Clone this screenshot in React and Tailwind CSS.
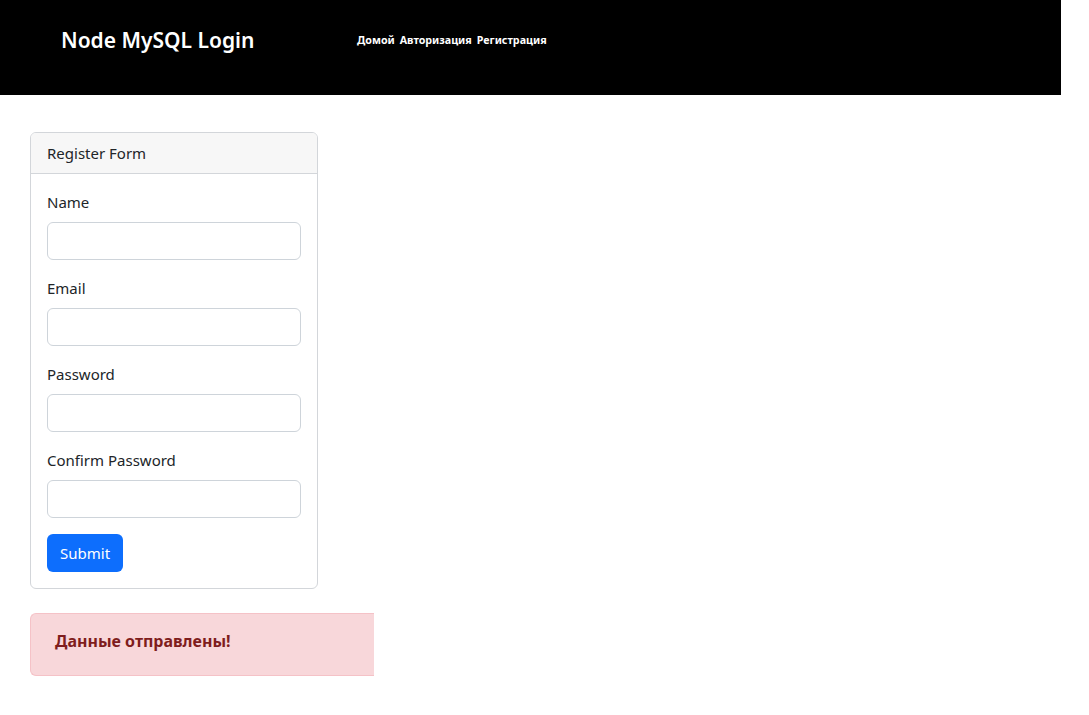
import React from 'react';

const fields = ['Name', 'Email', 'Password', 'Confirm Password'];

export default function App() {
  return (
    <div className="min-h-[715px] bg-white text-[#212529]" style={{ fontFamily: '"Noto Sans", "Open Sans", sans-serif' }}>
      {/* Navbar */}
      <nav className="w-[1061px] h-[95px] bg-black flex items-center">
        <h1 className="ml-[61px] w-[296px] text-[21px] font-semibold text-white leading-none pb-[15px]">Node MySQL Login</h1>
        <div className="flex gap-[5px] text-[10.7px] font-bold text-white pb-[15px]">
          <a href="#">Домой</a>
          <a href="#">Авторизация</a>
          <a href="#">Регистрация</a>
        </div>
      </nav>

      <div className="pl-[30px] pt-[37px]">
        {/* Card */}
        <div className="w-[288px] border border-[#d3d6da] rounded-[6px] overflow-hidden">
          <div className="h-[41px] bg-[#f7f7f7] border-b border-[#d3d6da] px-4 flex items-center text-[15px]">
            Register Form
          </div>
          <form className="p-4" onSubmit={e => e.preventDefault()}>
            {fields.map(f => (
              <div key={f} className="mb-4">
                <label className="block text-[15px] leading-6 mb-2">{f}</label>
                <input
                  type={f.includes('Password') ? 'password' : 'text'}
                  className="block w-full h-[38px] border border-[#ced4da] rounded-[6px] px-3 focus:outline-none"
                />
              </div>
            ))}
            <button type="submit" className="h-[38px] px-[13px] bg-[#0d6efd] text-white text-[15px] rounded-[6px]">
              Submit
            </button>
          </form>
        </div>

        {/* Alert */}
        <div className="mt-6 w-[344px] h-[63px] bg-[#f8d7da] border border-[#f5c2c7] border-r-0 rounded-l-[6px] flex items-center px-[24px] pb-[7px]">
          <h4 className="text-[16px] font-bold text-[#7f1d1d]">Данные отправлены!</h4>
        </div>
      </div>
    </div>
  );
}
